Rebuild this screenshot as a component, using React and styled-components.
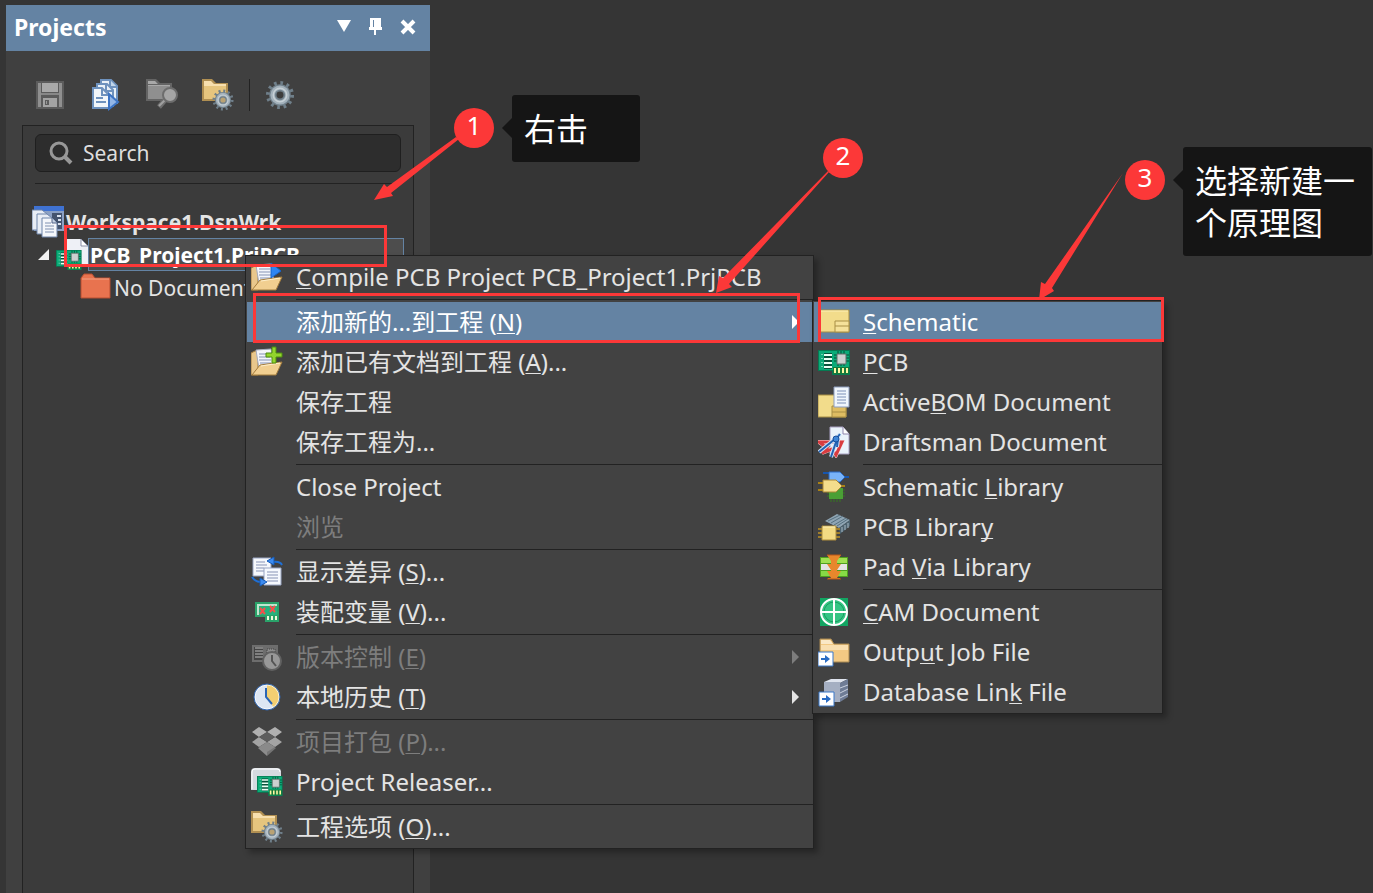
import React from 'react';
import styled, { createGlobalStyle } from 'styled-components';

// Icons
const Svg = ({ children, size = 32 }) => (
  <svg width={size} height={size} viewBox="0 0 32 32" aria-hidden="true">
    {children}
  </svg>
);

const Gear = ({ cx, cy, r, color = '#a3b1bb', edge = '#6f7f8a', hole }) => (
  <g transform={`translate(${cx} ${cy})`}>
    <circle r={r} fill="none" stroke={edge} strokeWidth={r * 0.34} strokeDasharray={`${r * 0.22} ${r * 0.3036}`} />
    <circle r={r * 0.9} fill={edge} />
    <circle r={r * 0.8} fill={color} />
    <circle r={r * 0.56} fill="none" stroke="#c6d0d6" strokeWidth={r * 0.12} />
    <circle r={r * 0.36} fill={hole || '#404040'} stroke={edge} strokeWidth={r * 0.14} />
  </g>
);

const SaveIcon = () => (
  <Svg>
    <path d="M2 2h28v28H2z" fill="#5c5c5c" />
    <path d="M4 4h3v24H4zM25 4h3v24h-3z" fill="#909090" />
    <path d="M8 4h16v9H8z" fill="#a9a9a9" />
    <path d="M7 14h18v2H7z" fill="#888" />
    <path d="M9 19h14v9H9z" fill="#a4a4a4" />
    <path d="M11 21h4v5h-4z" fill="#5c5c5c" />
    <path d="M12 22h1v3h-1z" fill="#999" />
  </Svg>
);

const DocsIcon = () => (
  <Svg>
    <path d="M11 1h10l6 6v17H11z" fill="#e9f1f8" stroke="#6e92be" strokeWidth="2" />
    <path d="M20 1v7h7" fill="#c2d6ea" stroke="#6e92be" strokeWidth="2" />
    <path d="M7 5h10l6 6v16H7z" fill="#e9f1f8" stroke="#6e92be" strokeWidth="2" />
    <path d="M16 5v7h6" fill="none" stroke="#6e92be" strokeWidth="2" />
    <path d="M3 9h9l7 7v13H3z" fill="#f1f6fa" stroke="#6e92be" strokeWidth="2" />
    <path d="M12 9v7h7" fill="none" stroke="#6e92be" strokeWidth="2" />
    <path d="M6 19h7M6 23h10" stroke="#6e92be" strokeWidth="2" />
    <path d="M19 15v15l9-7z" fill="#93b6e6" stroke="#3c74c4" strokeWidth="2" />
  </Svg>
);

const FolderSearchIcon = () => (
  <Svg>
    <path d="M0 0h10l4 4h12v18H0z" fill="#646464" />
    <path d="M2 7h22v13H2z" fill="#8f8f8f" />
    <path d="M2 2h7l3 3H2zM2 6h22v1H2z" fill="#a8a8a8" />
    <path d="M19 21l-6 7" stroke="#6d6d6d" strokeWidth="5" />
    <path d="M19 21l-6 6" stroke="#a0a0a0" strokeWidth="2" />
    <circle cx="24" cy="16" r="7" fill="#a5a5a5" stroke="#6d6d6d" strokeWidth="2" />
  </Svg>
);

const FolderGearIcon = () => (
  <Svg>
    <path d="M0 0h10l4 4h12v18H0z" fill="#b08f52" />
    <path d="M2 7h22v13H2z" fill="#e6c57e" />
    <path d="M2 2h7l3 3H2zM2 5h22v2H2z" fill="#f7dfae" />
    <Gear cx={21} cy={21} r={9} hole="#b9a273" />
  </Svg>
);

const GearIcon = () => (
  <Svg>
    <Gear cx={16} cy={16} r={12} hole="#3c3c3c" />
  </Svg>
);

const Board = ({ x = 0, y = 0, scale = 1 }) => (
  <g transform={`translate(${x} ${y}) scale(${scale})`}>
    <path d="M0 0h32v25H14v-4H0z" fill="#067a52" />
    <path d="M1 1h30v23H15v-4H1z" fill="#0bab78" />
    <path d="M6 3h8v16H6z" fill="#05523a" />
    <path d="M6 5h8M6 9h8M6 13h8M6 17h8" stroke="#e9fff4" strokeWidth="2" />
    <path d="M4 4v14" stroke="#d6f5e6" strokeWidth="1" strokeDasharray="1 3" />
    <path d="M16 5h15M16 8h15M16 11h15M20 1v15M23 1v15M26 1v15" stroke="#024e36" strokeWidth="1" />
    <path d="M19 4h9v10h-9z" fill="#ccd0cf" stroke="#5e6f68" strokeWidth="1" />
    <path d="M15 17h16v7H15z" fill="#167a3a" />
    <path d="M17 18v5M21 18v5M25 18v5M29 18v5" stroke="#fff8a4" strokeWidth="2" />
  </g>
);

const BoardIcon = () => (
  <Svg>
    <Board y={4} />
  </Svg>
);

const OpenFolder = () => (
  <>
    <path d="M0 7l4-2h3v24H0z" fill="#e8c78c" stroke="#a37c3d" strokeWidth="1" />
    <path d="M5 4l15-1 3 17-15 3z" fill="#f4f6fb" stroke="#a6acbd" strokeWidth="1" />
    <path d="M8 8h11M8 11h11M8 14h12M9 17h11" stroke="#8593b5" strokeWidth="1" />
    <path d="M9 19l22-3-6 13H1z" fill="#f1cf90" stroke="#a37c3d" strokeWidth="1" />
    <path d="M10 20l19-3" stroke="#fff0cc" strokeWidth="1" />
  </>
);

const CompileIcon = () => (
  <Svg>
    <OpenFolder />
    <path d="M20 2l10 8-10 7z" fill="#2f86f2" stroke="#1763c6" strokeWidth="1" />
  </Svg>
);

const AddExistingIcon = () => (
  <Svg>
    <OpenFolder />
    <path d="M21 1h4v6h6v4h-6v6h-4v-6h-6V7h6z" fill="#93d52d" stroke="#4d8c10" strokeWidth="1" />
  </Svg>
);

const DiffIcon = () => (
  <Svg>
    <path d="M2 2h18v18H2z" fill="#f6f8fc" stroke="#99a5c3" strokeWidth="1" />
    <path d="M5 6h9M5 9h11M5 12h8M5 15h8" stroke="#8793b5" strokeWidth="1" />
    <path d="M13 12h17v17H13z" fill="#f6f9fe" stroke="#99a5c3" strokeWidth="1" />
    <path d="M16 16h11M16 19h11M16 22h11M16 25h11" stroke="#8793b5" strokeWidth="1" />
    <path d="M31 9q-2-4-9-3M1 21q3 5 9 5" fill="none" stroke="#1e6fd6" strokeWidth="2" />
    <path d="M16 5l7-4v8zM16 26l-7-4v8z" fill="#3c8bf0" stroke="#155bb8" strokeWidth="1" />
  </Svg>
);

const VariantIcon = () => (
  <Svg>
    <path d="M4 6h24v20H14v-5H4z" fill="#2aa36a" />
    <path d="M6 8h20v2H8v9H6z" fill="#bfe6cf" />
    <path d="M8 10h18v9H8z" fill="#26b27d" />
    <path d="M9 12l5 6M14 12l-5 6M19 10l5 6M24 10l-5 6" stroke="#f5504c" strokeWidth="2" />
    <path d="M17 20v4M21 20v4M25 20v4" stroke="#eefada" strokeWidth="2" />
  </Svg>
);

const VersionIcon = () => (
  <Svg>
    <path d="M1 4h26v17H1z" fill="#6d6d6d" />
    <path d="M3 6h9v13H3z" fill="#444" />
    <path d="M4 7h8M4 10h8M4 13h8M4 16h8" stroke="#bbb" strokeWidth="1" />
    <path d="M16 8h8v8h-8z" fill="#8c8c8c" stroke="#444" strokeWidth="1" strokeDasharray="1 1" />
    <circle cx="21" cy="20" r="9" fill="#989898" stroke="#616161" strokeWidth="2" />
    <path d="M21 14v6l4 5" fill="none" stroke="#555" strokeWidth="2" />
  </Svg>
);

const HistoryIcon = () => (
  <Svg>
    <circle cx="16" cy="16" r="13" fill="#dde6f3" />
    <path d="M16 16V3a13 13 0 0 1 7 24z" fill="#f3cf72" />
    <circle cx="16" cy="16" r="12" fill="none" stroke="#fff" strokeOpacity="0.7" strokeWidth="1" />
    <circle cx="16" cy="16" r="13" fill="none" stroke="#2d63b0" strokeWidth="1" />
    <path d="M15 7v9l6 7" fill="none" stroke="#2b65b5" strokeWidth="2" />
  </Svg>
);

const PackIcon = () => (
  <Svg>
    <path d="M8 1l8 5-8 5-7-5zM24 1l7 5-7 5-8-5z" fill="#b0b0b0" />
    <path d="M8 11l8 5-8 5-7-5zM24 11l7 5-7 5-8-5z" fill="#a3a3a3" />
    <path d="M16 6l8 5-8 5-8-5z" fill="#5d5d5d" />
    <path d="M7 22l2-1 7-4v13z" fill="#8c8c8c" />
    <path d="M16 17l9 5-9 8z" fill="#747474" />
    <path d="M8 21l8-5 8 5-8 5z" fill="#8a8a8a" />
  </Svg>
);

const ReleaserIcon = () => (
  <Svg>
    <path d="M0 24V6q0-4 4-4h22q4 0 4 4v18z" fill="#d5dae0" />
    <path d="M1 23V6q0-3 3-3h22q3 0 3 3" fill="none" stroke="#fff" strokeWidth="1" />
    <Board x={6} y={10} scale={0.8} />
  </Svg>
);

const SchematicIcon = () => (
  <Svg>
    <path d="M0 4h31v22H0z" fill="#f2dc8b" stroke="#a98f45" strokeWidth="1" />
    <path d="M1 5h29" stroke="#fdf0b8" strokeWidth="1" />
    <path d="M17 15h14v11H17zM17 20h14" fill="#f5e19a" stroke="#a98f45" strokeWidth="1" />
  </Svg>
);

const BomIcon = () => (
  <Svg>
    <path d="M0 9h28v22H0z" fill="#f2dc8b" stroke="#a98f45" strokeWidth="1" />
    <path d="M14 20h14v11H14zM14 26h14" fill="#dfbd62" stroke="#a98f45" strokeWidth="1" />
    <path d="M16 1h15v20H16z" fill="#f0f6fd" stroke="#8d9dbe" strokeWidth="1" />
    <path d="M19 5h9M19 8h9M19 11h9M19 14h9M19 17h9" stroke="#7d90b7" strokeWidth="1" />
  </Svg>
);

const DraftsmanIcon = () => (
  <Svg>
    <path d="M12 1h13l6 7v20H12z" fill="#eaf3fb" stroke="#a79fc0" strokeWidth="1" />
    <path d="M25 1v7h6" fill="#fff" stroke="#8f86ad" strokeWidth="1" />
    <path d="M1 16h23l-6 13-4-6-10 4 5-5z" fill="none" stroke="#f4dfe2" strokeWidth="4" />
    <path d="M1 16h23l-6 13-4-6-10 4 5-5z" fill="none" stroke="#d83c40" strokeWidth="3" />
    <path d="M22 8l-4 5M17 13L1 26M19 13l-6 18M20 13l-1 8" fill="none" stroke="#cfe2f8" strokeWidth="4" />
    <path d="M22 8l-4 5M17 13L1 26M19 13l-6 18M20 13l-1 8" fill="none" stroke="#2363b4" strokeWidth="2" />
    <circle cx="18" cy="13" r="3" fill="#3f86d8" stroke="#184f9b" strokeWidth="1" />
  </Svg>
);

const SchLibIcon = () => (
  <Svg>
    <path d="M9 19h18M9 22h18M9 25h18M13 17v14M16 17v14M19 17v14M22 17v14" stroke="#34791f" strokeWidth="1" />
    <path d="M11 17h14v11H11z" fill="#4a9f35" />
    <path d="M5 2h7M5 10h7M26 6h5" stroke="#1756ae" strokeWidth="2" />
    <path d="M11 1h11l5 5-5 5H11z" fill="#79b3f8" stroke="#2b6bc5" strokeWidth="1" />
    <path d="M0 12h6M0 19h6M23 15h4" stroke="#a98115" strokeWidth="2" />
    <path d="M5 9h13l6 6-6 6H5z" fill="#f4dd8c" stroke="#aa8736" strokeWidth="1" />
  </Svg>
);

const PcbLibIcon = () => (
  <Svg>
    <path d="M7 10l12-7 13 6-11 8z" fill="#8fa5b4" />
    <path d="M10 10l12-6M13 12l12-7M16 14l12-7M19 15l11-7" stroke="#56707f" strokeWidth="1" />
    <path d="M21 17l11-8v6l-10 8z" fill="#4d6370" />
    <path d="M24 16v5M27 14v5M30 12v5" stroke="#a9bac5" strokeWidth="1" />
    <path d="M0 18h22M0 22h22M0 26h22" stroke="#9f7e2b" strokeWidth="2" />
    <path d="M4 15h14v14H4z" fill="#f3da83" stroke="#ad8c3b" strokeWidth="1" />
    <path d="M5 16h12" stroke="#fff0b5" strokeWidth="1" />
  </Svg>
);

const PadViaIcon = () => (
  <Svg>
    <path d="M2 6h28v20H2z" fill="#4f9f1f" />
    <path d="M3 7h26v5H3z" fill="#9fe052" />
    <path d="M3 13h26v6H3z" fill="#e3e3e3" />
    <path d="M3 20h26v5H3z" fill="#86da46" />
    <path d="M9 4h14l-4 6v3h4l-4 6v1h4l-4 7h3v1H10v-1h3l-4-7h4v-1l-4-6h4v-3z" fill="#e8872c" />
    <path d="M9 4h14M9 28h14" stroke="#ba5717" strokeWidth="1" />
  </Svg>
);

const CamIcon = () => (
  <Svg>
    <path d="M2 2h28v28H2z" fill="#12a562" />
    <circle cx="16" cy="16" r="13" fill="#35c483" stroke="#fff" strokeWidth="2" />
    <circle cx="16" cy="16" r="10" fill="none" stroke="#179f60" strokeWidth="1" />
    <path d="M16 3v26M3 16h26" stroke="#fff" strokeWidth="2" />
  </Svg>
);

const LinkBadge = ({ x }) => (
  <g transform={`translate(${x} 16)`}>
    <path d="M0 0h15v14H0z" fill="#fff" stroke="#3a78c9" strokeWidth="1" />
    <path d="M3 7h7" stroke="#2a6cc4" strokeWidth="2" />
    <path d="M7 3l5 4-5 4z" fill="#2a6cc4" />
  </g>
);

const OutputJobIcon = () => (
  <Svg>
    <path d="M2 3h11l3 5h15v18H2z" fill="#f3c983" stroke="#a98952" strokeWidth="1" />
    <path d="M3 4h9l3 4H3z" fill="#fae8c6" />
    <path d="M3 9h27v5H3z" fill="#f9dfb0" />
    <LinkBadge x={0} />
  </Svg>
);

const DatabaseIcon = () => (
  <Svg>
    <path d="M6 6l7-3h17l-8 4z" fill="#dfe4ee" />
    <path d="M6 6h16v20H6z" fill="#a5afc2" />
    <path d="M22 7l8-4v18l-8 5z" fill="#6f7c95" />
    <path d="M22 12l8-3M22 17l8-4M22 22l8-4" stroke="#cbd2df" strokeWidth="1" />
    <LinkBadge x={1} />
  </Svg>
);

const WorkspaceIcon = () => (
  <Svg>
    <path d="M2 0h30v25H2z" fill="#8ba0c4" />
    <path d="M2 0h30v5H2z" fill="#3f72d2" />
    <path d="M20 7h10v16H20z" fill="#43536f" />
    <path d="M25 10h4M26 14h3M26 18h3" stroke="#d8e0ee" strokeWidth="2" />
    <path d="M0 4h10l5 4v16H0z" fill="#e8edf5" stroke="#6f85aa" strokeWidth="1" />
    <path d="M5 8h10l5 4v16H5z" fill="#e8edf5" stroke="#6f85aa" strokeWidth="1" />
    <path d="M10 12h10l5 5v14H10z" fill="#f5f7fb" stroke="#6f85aa" strokeWidth="1" />
    <path d="M13 17h6M13 20h9M13 23h9M13 26h9" stroke="#7f90b0" strokeWidth="1" />
    <path d="M20 12v5h5" fill="#c8d3e4" stroke="#52658a" strokeWidth="1" />
  </Svg>
);

const ProjectIcon = () => (
  <Svg>
    <path d="M11 0h14l7 7v20H11z" fill="#eef0f6" />
    <path d="M25 0v7h7z" fill="#fff" stroke="#8b8fa6" strokeWidth="1" />
    <Board x={0} y={11} scale={0.8} />
  </Svg>
);

const EmptyFolderIcon = () => (
  <Svg>
    <path d="M1 6l3-4h8l3 4h15v20H1z" fill="#e8734f" stroke="#b84e31" strokeWidth="1" />
    <path d="M2 7h27" stroke="#f3a184" strokeWidth="1" />
  </Svg>
);

const SearchIcon = () => (
  <svg width="24" height="24" viewBox="0 0 24 24" aria-hidden="true">
    <circle cx="10" cy="10" r="8" fill="none" stroke="#989898" strokeWidth="3" />
    <path d="M15 15l7 7" stroke="#989898" strokeWidth="4" />
  </svg>
);

const DropIcon = () => (
  <svg width="16" height="18" viewBox="0 0 16 18" aria-hidden="true">
    <path d="M1 2h14L8 14z" fill="#fff" />
  </svg>
);

const PinIcon = () => (
  <svg width="16" height="18" viewBox="0 0 16 18" aria-hidden="true">
    <path d="M2 0h11v9h1v3H8v5H6v-5H1V9h1z" fill="#fff" />
    <path d="M5 2h1v7H5z" fill="#6483a3" />
  </svg>
);

const CloseIcon = () => (
  <svg width="16" height="18" viewBox="0 0 16 18" aria-hidden="true">
    <path d="M2 3l12 12M14 3L2 15" stroke="#fff" strokeWidth="4" />
  </svg>
);

// Data, "&" stands before the access key
const projectMenu = [
  [{ label: '&Compile PCB Project PCB_Project1.PrjPCB', icon: CompileIcon }],
  [
    { label: '添加新的...到工程 (&N)', sub: true, active: true },
    { label: '添加已有文档到工程 (&A)...', icon: AddExistingIcon },
    { label: '保存工程' },
    { label: '保存工程为...' },
  ],
  [{ label: 'Close Project' }, { label: '浏览', disabled: true }],
  [
    { label: '显示差异 (&S)...', icon: DiffIcon },
    { label: '装配变量 (&V)...', icon: VariantIcon },
  ],
  [
    { label: '版本控制 (&E)', icon: VersionIcon, sub: true, disabled: true },
    { label: '本地历史 (&T)', icon: HistoryIcon, sub: true },
  ],
  [
    { label: '项目打包 (&P)...', icon: PackIcon, disabled: true },
    { label: 'Project Releaser...', icon: ReleaserIcon },
  ],
  [{ label: '工程选项 (&O)...', icon: FolderGearIcon }],
];

const newDocumentMenu = [
  [
    { label: '&Schematic', icon: SchematicIcon, active: true },
    { label: '&PCB', icon: BoardIcon },
    { label: 'Active&BOM Document', icon: BomIcon },
    { label: 'Draftsman Document', icon: DraftsmanIcon },
  ],
  [
    { label: 'Schematic &Library', icon: SchLibIcon },
    { label: 'PCB Librar&y', icon: PcbLibIcon },
    { label: 'Pad &Via Library', icon: PadViaIcon },
  ],
  [
    { label: '&CAM Document', icon: CamIcon },
    { label: 'Outp&ut Job File', icon: OutputJobIcon },
    { label: 'Database Lin&k File', icon: DatabaseIcon },
  ],
];

const withAccessKey = (label) => {
  const at = label.indexOf('&');
  if (at < 0) return label;
  return (
    <>
      {label.slice(0, at)}
      <u>{label[at + 1]}</u>
      {label.slice(at + 2)}
    </>
  );
};

const ContextMenu = ({ groups, x, y, width, name }) => (
  <Menu role="menu" aria-label={name} $x={x} $y={y} $width={width}>
    {groups.map((items, index) => (
      <React.Fragment key={index}>
        {index > 0 && <MenuLine />}
        {items.map(({ label, icon: Icon, sub, active, disabled }) => (
          <MenuItem key={label} role="menuitem" $active={active} disabled={disabled}>
            <IconSlot>{Icon && <Icon />}</IconSlot>
            <MenuLabel>{withAccessKey(label)}</MenuLabel>
            {sub && <SubArrow />}
          </MenuItem>
        ))}
      </React.Fragment>
    ))}
  </Menu>
);

const App = () => (
  <>
    <GlobalStyle />
    <Desktop>
      <Panel>
        <PanelHeader>
          <h1>Projects</h1>
          <TitleButton aria-label="Panel menu">
            <DropIcon />
          </TitleButton>
          <TitleButton aria-label="Pin">
            <PinIcon />
          </TitleButton>
          <TitleButton aria-label="Close">
            <CloseIcon />
          </TitleButton>
        </PanelHeader>
        <Toolbar>
          <ToolButton aria-label="Save" disabled>
            <SaveIcon />
          </ToolButton>
          <ToolButton aria-label="Compile">
            <DocsIcon />
          </ToolButton>
          <ToolButton aria-label="Explore" disabled>
            <FolderSearchIcon />
          </ToolButton>
          <ToolButton aria-label="Project options">
            <FolderGearIcon />
          </ToolButton>
          <ToolLine />
          <ToolButton aria-label="Settings">
            <GearIcon />
          </ToolButton>
        </Toolbar>
        <Explorer>
          <SearchBox>
            <SearchIcon />
            <input type="text" placeholder="Search" aria-label="Search" />
          </SearchBox>
          <Tree>
            <TreeRow $indent={0}>
              <WorkspaceIcon />
              <TreeLabel $bold>Workspace1.DsnWrk</TreeLabel>
            </TreeRow>
            <TreeRow $indent={6}>
              <Expander aria-label="Collapse" />
              <ProjectIcon />
              <TreeLabel $bold $selected>
                PCB_Project1.PrjPCB
              </TreeLabel>
            </TreeRow>
            <TreeRow $indent={48}>
              <EmptyFolderIcon />
              <TreeLabel>No Documents</TreeLabel>
            </TreeRow>
          </Tree>
        </Explorer>
      </Panel>

      <ContextMenu name="Project" groups={projectMenu} x={245} y={255} width={569} />
      <ContextMenu name="Add new" groups={newDocumentMenu} x={812} y={300} width={351} />

      <Frame $x={64} $y={225} $w={323} $h={42} />
      <Frame $x={253} $y={293} $w={547} $h={50} />
      <Frame $x={818} $y={297} $w={346} $h={45} />
      <Arrows aria-hidden="true">
        <path d="M374 200L384 184L387 187L456 137L459 139L391 193L393 196Z" />
        <path d="M716 293L719 276L723 278L828 171L829 172L729 284L732 287Z" />
        <path d="M1039 300L1041 282L1045 284L1123 173L1052 288L1054 291Z" />
      </Arrows>
      <Step $x={454} $y={108}>1</Step>
      <Step $x={823} $y={138}>2</Step>
      <Step $x={1125} $y={160}>3</Step>
      <Callout $x={512} $y={95} $width={128}>右击</Callout>
      <Callout $x={1183} $y={147} $width={189}>选择新建一个原理图</Callout>
    </Desktop>
  </>
);

const GlobalStyle = createGlobalStyle`
  * {
    box-sizing: border-box;
  }
  body {
    margin: 0;
    background: #353535;
    color: #e4e4e4;
    font-family: 'Noto Sans', 'Noto Sans CJK SC', sans-serif;
  }
  button, input {
    border: 0;
    padding: 0;
    background: none;
    color: inherit;
    font: inherit;
  }
  svg {
    display: block;
    flex-shrink: 0;
  }
`;

const Desktop = styled.main`
  position: relative;
  display: flex;
  min-height: 100vh;
  padding: 5px 6px 0;
  overflow: hidden;
`;

const Panel = styled.section`
  display: flex;
  flex-direction: column;
  width: 424px;
  background: #404040;
`;

const PanelHeader = styled.header`
  display: flex;
  align-items: center;
  gap: 16px;
  height: 46px;
  padding: 0 14px 2px 8px;
  background: #6483a3;
  color: #fff;
  h1 {
    flex: 1;
    margin: 0;
    font-size: 23px;
    line-height: 32px;
  }
`;

const TitleButton = styled.button`
  width: 16px;
  height: 18px;
`;

const Toolbar = styled.div`
  display: flex;
  align-items: center;
  gap: 24px;
  padding: 28px 28px 14px;
`;

const ToolButton = styled.button`
  width: 32px;
  height: 32px;
`;

const ToolLine = styled.span`
  width: 1px;
  height: 32px;
  margin: 0 -10px 0 -9px;
  background: #222;
`;

const Explorer = styled.div`
  flex: 1;
  margin: 0 16px;
  padding: 8px 12px 0;
  border: 1px solid #222;
  border-bottom: 0;
  background: #3b3b3b;
`;

const SearchBox = styled.label`
  display: flex;
  align-items: center;
  gap: 10px;
  height: 38px;
  padding: 0 13px;
  border: 1px solid #1f1f1f;
  border-radius: 6px;
  background: #2d2d2d;
  input {
    flex: 1;
    min-width: 0;
    font-size: 21px;
    outline: 0;
  }
  input::placeholder {
    color: #dedede;
    opacity: 1;
  }
`;

const Tree = styled.div`
  margin: 11px 0 0;
  padding-top: 21px;
  border-top: 1px solid #222;
`;

const TreeRow = styled.div`
  display: flex;
  align-items: center;
  height: 33px;
  margin: 0 -3px;
  padding-left: ${({ $indent }) => $indent}px;
`;

const Expander = styled.button`
  width: 11px;
  height: 11px;
  margin-right: 7px;
  background: #f2f2f2;
  clip-path: polygon(100% 0, 100% 100%, 0 100%);
`;

const TreeLabel = styled.span`
  flex: 1;
  height: 33px;
  padding-left: 1px;
  border: 1px solid ${({ $selected }) => ($selected ? '#6483a3' : 'transparent')};
  background: ${({ $selected }) => ($selected ? '#4d4d4d' : 'none')};
  color: ${({ $selected }) => ($selected ? '#fff' : '#e4e4e4')};
  font-size: 21px;
  font-weight: ${({ $bold }) => ($bold ? 700 : 400)};
  line-height: 32px;
  white-space: nowrap;
`;

const Menu = styled.div`
  position: absolute;
  left: ${({ $x }) => $x}px;
  top: ${({ $y }) => $y}px;
  width: ${({ $width }) => $width}px;
  padding: 1px 0 1px 1px;
  border: 1px solid #222;
  background: #424242;
  box-shadow: 4px 4px 6px rgba(0, 0, 0, 0.3);
`;

const MenuItem = styled.button`
  display: flex;
  align-items: center;
  width: 100%;
  height: 40px;
  padding: 0 14px 0 4px;
  background: ${({ $active }) => ($active ? '#6483a3' : 'none')};
  color: ${({ $active }) => ($active ? '#fff' : '#e4e4e4')};
  font-size: 24px;
  line-height: 40px;
  text-align: left;
  white-space: nowrap;
  &:disabled {
    color: #7d7d7d;
  }
`;

const IconSlot = styled.span`
  width: 32px;
  height: 32px;
  margin-right: 13px;
`;

const MenuLabel = styled.span`
  flex: 1;
  u {
    text-decoration-thickness: 1px;
    text-decoration-skip-ink: none;
    text-underline-offset: 2px;
  }
`;

const SubArrow = styled.span`
  border: 7px solid transparent;
  border-left-color: currentColor;
  border-right: 0;
`;

const MenuLine = styled.hr`
  height: 1px;
  margin: 2px 0 2px 49px;
  border: 0;
  background: #222;
`;

// Annotations drawn over the window
const Frame = styled.div`
  position: absolute;
  left: ${({ $x }) => $x}px;
  top: ${({ $y }) => $y}px;
  width: ${({ $w }) => $w}px;
  height: ${({ $h }) => $h}px;
  border: 3px solid #fc3838;
  pointer-events: none;
`;

const Arrows = styled.svg`
  position: absolute;
  inset: 0;
  width: 100%;
  height: 100%;
  fill: #fc3838;
  pointer-events: none;
`;

const Step = styled.span`
  position: absolute;
  left: ${({ $x }) => $x}px;
  top: ${({ $y }) => $y}px;
  width: 40px;
  height: 40px;
  border-radius: 50%;
  background: #fc3838;
  color: #fff;
  font-size: 26px;
  line-height: 34px;
  text-align: center;
`;

const Callout = styled.div`
  position: absolute;
  left: ${({ $x }) => $x}px;
  top: ${({ $y }) => $y}px;
  width: ${({ $width }) => $width}px;
  padding: 13px 12px 12px;
  border-radius: 3px;
  background: #151515;
  color: #fff;
  font-size: 32px;
  line-height: 42px;
  &::before {
    content: '';
    position: absolute;
    top: 23px;
    left: -10px;
    border: 10px solid transparent;
    border-right-color: #151515;
    border-left: 0;
  }
`;

export default App;
